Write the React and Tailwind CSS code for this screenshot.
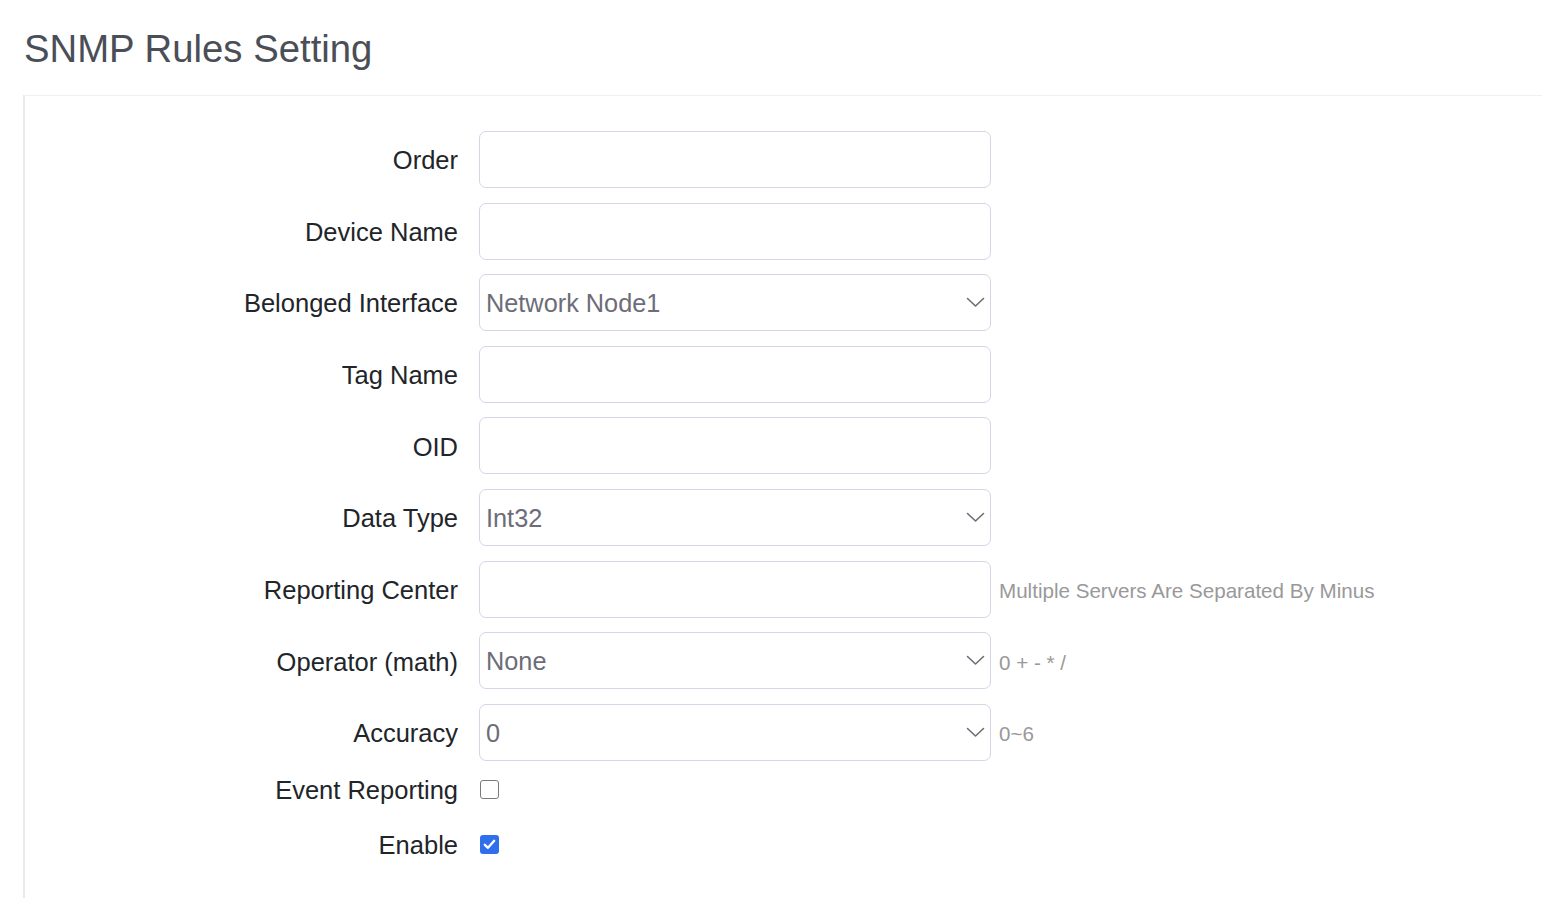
import React from "react";

const font = { fontFamily: '"Liberation Sans", Arial, Helvetica, sans-serif' };

function Chevron() {
  return (
    <svg width="19" height="11" viewBox="0 0 19 11" className="shrink-0">
      <path d="M1.5 1.5 L9.5 9 L17.5 1.5" fill="none" stroke="#6b6d78" strokeWidth="1.6" strokeLinecap="round" strokeLinejoin="round" />
    </svg>
  );
}

function Row({ label, children, hint }) {
  return (
    <div className="flex items-center h-[57px]">
      <div className="w-[433px] text-right text-[25.5px] text-[#212529] leading-none pt-[3px]">{label}</div>
      <div className="ml-[21px] w-[512px] h-[57px] shrink-0">{children}</div>
      {hint && <div className="ml-[8px] text-[20.6px] text-[#999999] leading-none pt-[4px]">{hint}</div>}
    </div>
  );
}

function TextInput() {
  return <div className="w-full h-full rounded-[7px] border border-[#d6d4e6] bg-white" />;
}

function Select({ value }) {
  return (
    <div className="w-full h-full rounded-[7px] border border-[#d6d4e6] bg-white flex items-center justify-between pl-[6px] pr-[5px]">
      <span className="text-[25.3px] text-[#6c6d78] leading-none pt-[2px]">{value}</span>
      <Chevron />
    </div>
  );
}

function CheckRow({ label, checked, className }) {
  return (
    <div className={"flex items-center h-[28px] " + (className || "")}>
      <div className="w-[433px] text-right text-[25.5px] text-[#212529] leading-none pt-[3px]">{label}</div>
      <div className="ml-[22px]">
        {checked ? (
          <div className="w-[19px] h-[19px] rounded-[3px] bg-[#2f6fed] flex items-center justify-center">
            <svg width="13" height="11" viewBox="0 0 13 11">
              <path d="M1.8 5.8 L5 8.8 L11.2 1.8" fill="none" stroke="white" strokeWidth="2.4" strokeLinecap="round" strokeLinejoin="round" />
            </svg>
          </div>
        ) : (
          <div className="w-[19px] h-[19px] rounded-[3px] border-[1.5px] border-[#7a7a7a] bg-white" />
        )}
      </div>
    </div>
  );
}

export default function App() {
  return (
    <div className="min-h-screen bg-white overflow-hidden" style={font}>
      <div className="pl-[24px] pt-[26px]">
        <h1 className="text-[38.3px] leading-[1.2] text-[#4a4e56] font-normal">SNMP Rules Setting</h1>
      </div>
      <div className="mt-[23px] ml-[23px] border-t border-l-2 border-t-[#f0f0f0] border-l-[#e9e9e9] pt-[35px] pb-[60px]">
        <div className="flex flex-col gap-[14.625px]">
          <Row label="Order"><TextInput /></Row>
          <Row label="Device Name"><TextInput /></Row>
          <Row label="Belonged Interface"><Select value="Network Node1" /></Row>
          <Row label="Tag Name"><TextInput /></Row>
          <Row label="OID"><TextInput /></Row>
          <Row label="Data Type"><Select value="Int32" /></Row>
          <Row label="Reporting Center" hint="Multiple Servers Are Separated By Minus"><TextInput /></Row>
          <Row label="Operator (math)" hint="0 + - * /"><Select value="None" /></Row>
          <Row label="Accuracy" hint="0~6"><Select value="0" /></Row>
          <CheckRow label="Event Reporting" checked={false} />
        </div>
        <CheckRow label="Enable" checked className="mt-[27px]" />
      </div>
    </div>
  );
}
